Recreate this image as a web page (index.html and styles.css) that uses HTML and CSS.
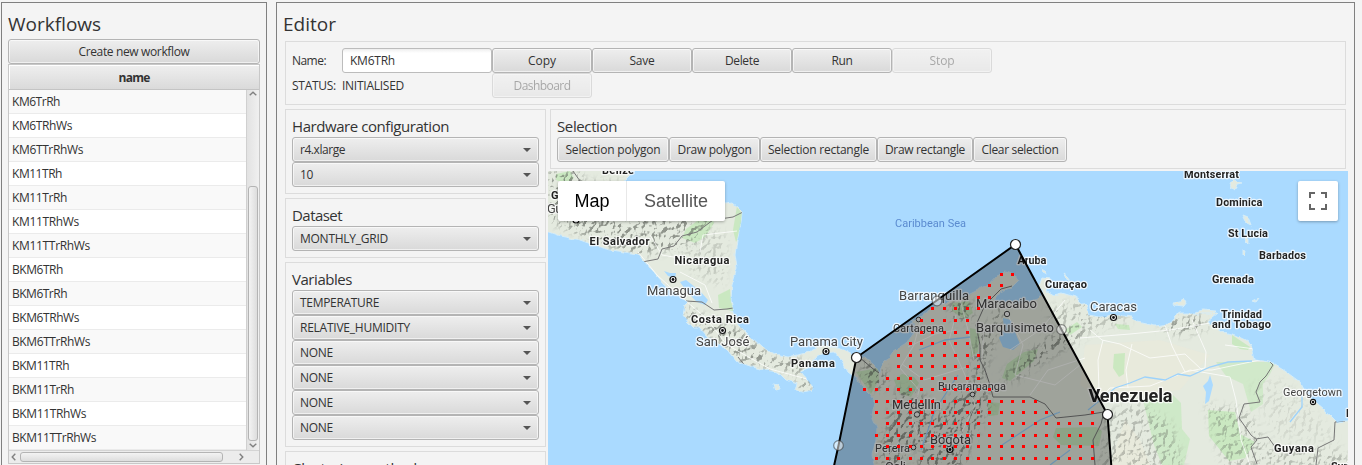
FILE: index.html
```html
<!DOCTYPE html>
<html lang="en">
<head>
<meta charset="utf-8">
<title>Workflow editor</title>
<link rel="stylesheet" href="styles.css">
</head>
<body>
<div class="app">
  <section class="panel workflows">
    <h1 class="title">Workflows</h1>
    <button class="btn create"><span class="t" data-w="111">Create new workflow</span></button>
    <div class="table">
      <div class="thead"><span class="t" data-w="31">name</span></div>
      <div class="tbody">
        <ul class="rows">
          <li><span class="t" data-w="48">KM6TrRh</span></li>
          <li><span class="t" data-w="60">KM6TRhWs</span></li>
          <li><span class="t" data-w="71">KM6TTrRhWs</span></li>
          <li><span class="t" data-w="50">KM11TRh</span></li>
          <li><span class="t" data-w="55">KM11TrRh</span></li>
          <li><span class="t" data-w="67">KM11TRhWs</span></li>
          <li><span class="t" data-w="78">KM11TTrRhWs</span></li>
          <li><span class="t" data-w="51">BKM6TRh</span></li>
          <li><span class="t" data-w="55">BKM6TrRh</span></li>
          <li><span class="t" data-w="67">BKM6TRhWs</span></li>
          <li><span class="t" data-w="78">BKM6TTrRhWs</span></li>
          <li><span class="t" data-w="57">BKM11TRh</span></li>
          <li><span class="t" data-w="62">BKM11TrRh</span></li>
          <li><span class="t" data-w="74">BKM11TRhWs</span></li>
          <li><span class="t" data-w="84">BKM11TTrRhWs</span></li>
        </ul>
        <div class="vscroll">
          <svg class="chev" width="8" height="5" viewBox="0 0 8 5"><path d="M.7 4.3 4 1.2 7.300 4.300"/></svg>
          <div class="vthumb"></div>
          <svg class="chev" width="8" height="5" viewBox="0 0 8 5"><path d="M.7.700 4 3.800 7.300.700"/></svg>
        </div>
      </div>
      <div class="hscroll">
        <svg class="chev" width="5" height="8" viewBox="0 0 5 8"><path d="M4.300.700 1.200 4 4.300 7.300"/></svg>
        <div class="hthumb"></div>
        <svg class="chev" width="5" height="8" viewBox="0 0 5 8"><path d="M.7.700 3.800 4 .7 7.300"/></svg>
      </div>
    </div>
  </section>

  <section class="panel editor">
    <h1 class="title">Editor</h1>
    <div class="box details">
      <span class="t" data-w="34">Name:</span>
      <div class="field"><span class="t" data-w="45">KM6TRh</span></div>
      <button class="btn"><span class="t" data-w="28">Copy</span></button>
      <button class="btn"><span class="t" data-w="25">Save</span></button>
      <button class="btn"><span class="t" data-w="34">Delete</span></button>
      <button class="btn"><span class="t" data-w="21">Run</span></button>
      <button class="btn off"><span class="t" data-w="25">Stop</span></button>
      <span class="t" data-w="44">STATUS:</span>
      <span class="t" data-w="62">INITIALISED</span>
      <button class="btn off"><span class="t" data-w="57">Dashboard</span></button>
    </div>
    <div class="columns">
      <div class="settings">
        <div class="box group">
          <h2><span class="t" data-w="157">Hardware configuration</span></h2>
          <div class="select"><span class="t" data-w="45">r4.xlarge</span></div>
          <div class="select"><span class="t" data-w="13">10</span></div>
        </div>
        <div class="box group">
          <h2><span class="t" data-w="50">Dataset</span></h2>
          <div class="select"><span class="t" data-w="88">MONTHLY_GRID</span></div>
        </div>
        <div class="box group">
          <h2><span class="t" data-w="60">Variables</span></h2>
          <div class="select"><span class="t" data-w="79">TEMPERATURE</span></div>
          <div class="select"><span class="t" data-w="110">RELATIVE_HUMIDITY</span></div>
          <div class="select"><span class="t" data-w="33">NONE</span></div>
          <div class="select"><span class="t" data-w="33">NONE</span></div>
          <div class="select"><span class="t" data-w="33">NONE</span></div>
          <div class="select"><span class="t" data-w="33">NONE</span></div>
        </div>
        <div class="box group">
          <h2><span class="t" data-w="125">Clustering method</span></h2>
        </div>
      </div>
      <div class="workspace">
        <div class="box group selection">
          <h2><span class="t" data-w="60">Selection</span></h2>
          <div class="tools">
            <button class="btn"><span class="t" data-w="95">Selection polygon</span></button>
            <button class="btn"><span class="t" data-w="74">Draw polygon</span></button>
            <button class="btn"><span class="t" data-w="101">Selection rectangle</span></button>
            <button class="btn"><span class="t" data-w="80">Draw rectangle</span></button>
            <button class="btn"><span class="t" data-w="77">Clear selection</span></button>
          </div>
        </div>
        <div class="map">
          <svg class="canvas" width="800" height="294" viewBox="548 171 800 294">
            <defs>
              <filter id="relief" x="0" y="0" width="100%" height="100%" color-interpolation-filters="sRGB">
                <feTurbulence type="fractalNoise" baseFrequency=".2 .17" numOctaves="3" seed="7" result="n"/>
                <feDiffuseLighting in="n" surfaceScale="4" diffuseConstant="1.25" lighting-color="#fff"><feDistantLight azimuth="225" elevation="52"/></feDiffuseLighting>
                <feColorMatrix values="0 0 0 0 .36  0 0 0 0 .38  0 0 0 0 .35  -2.400 0 0 0 1.950" result="sh"/>
                <feGaussianBlur in="SourceAlpha" stdDeviation="4" result="m"/>
                <feComposite in="sh" in2="m" operator="in"/>
              </filter>
              <filter id="rough" x="-5%" y="-5%" width="110%" height="110%">
                <feTurbulence type="fractalNoise" baseFrequency=".12" numOctaves="2" seed="3"/>
                <feDisplacementMap in="SourceGraphic" scale="5" xChannelSelector="R" yChannelSelector="G"/>
              </filter>
              <clipPath id="landclip"><use href="#land"/></clipPath>
            </defs>
            <rect class="water" x="548" y="171" width="800" height="294"/>
            <g filter="url(#rough)">
              <path id="land" class="land" d="M540 160H634L630 174 622 182 640 195 700 200 725 204 732 203 738 208 742 212 741 222 737 240 735 255 737 268 732 285 731 300 733 310 740 326 752 338 763 348 775 354 788 357 806 353 820 347 833 346 845 351 856 357 865 357 875 366 880 373 881 366 886 361 893 352 907 342 917 329 912 322 922 316 932 308 946 303 960 299 974 292 988 285 996 276 1005 272 1014 275 1018 281 1012 287 1000 292 993 300 1000 302 1020 304 1038 299 1043 292 1039 286 1042 278 1050 279 1047 291 1054 295 1062 293 1075 297 1085 305 1088 315 1100 317 1115 315 1132 317 1138 322 1155 326 1168 324 1175 316 1180 313 1200 313 1218 313 1208 321 1220 331 1236 335 1248 341 1253 350 1255 360 1270 362 1285 371 1300 382 1306 393 1318 405 1330 415 1337 422 1356 420V475H876L872 455 876 440 877 428 872 415 875 402 870 395 862 387 856 378 848 372 842 361 835 353 822 354 812 360 807 368 800 371 808 380 814 387 812 390 803 392 795 391 797 383 786 380 778 372 765 370 750 366 738 362 728 350 718 343 708 337 700 328 694 328 688 322 683 315 685 305 688 302 680 297 665 285 652 270 643 260 638 254 625 252 605 249 580 240 560 236 540 229Z"/>
              <path class="land" d="M773 384l5 1 1 4-4 1zM1174 304l6-1 3-5 3 5-3 4-8-1zM1195 312l8-2 13 1-3 3h-16zM1243 215l5 2 3 8-4-2zM1229 183l5-3 8 3-5 1-2 6-4-3zM1253 301l6-3-3 4zM1243 250l3 1-1 5-2-2zM1246 237l2 1v5l-3-3zM1041 268l4 2 2 4-4-2zM1063 273l5 4 3 4-5-3z"/>
            </g>
            <g clip-path="url(#landclip)">
              <g class="plain">
                <path d="M1085 345 1160 340 1210 355 1180 390 1100 400 1080 385z"/>
                <path d="M1125 420 1140 440 1150 465H1110z"/>
              </g>
              <g class="forest">
                <path d="M556 174l14-3 4 7-8 6-10-4z"/><path d="M686 229l14-10 12 0 2 4-9 14-10 6-13-5z"/>
                <path d="M737 206l5 8-1 20-5 8-3-12z"/><path d="M718 295l12-6 1 13 6 10-18-4z"/>
                <path d="M856 372l22-4 1 12-8 14z"/><path d="M952 303l17-2 4 12-9 6-12-8z"/>
                <path d="M894 380l8-6 12 3 5 6-8 14-12-4z"/><path d="M970 328l10 2-2 22-7 5z"/>
                <path d="M1007 364l17-12 14-3-4 12-24 20-8-3z"/><path d="M988 402l12 1-2 12-9 1z"/>
                <path d="M1056 428l40-1 6 4-3 15-38-1-8-8z"/><path d="M1114 354l11-1-1 21-5 3-6-9z"/>
                <path d="M1232 335l18 12-2 3-8-1-8-5z"/><path d="M1216 362l60 0-6 12-7 10 0 20-12 8-8-28-17-8z" opacity=".7"/>
                <path d="M1143 400l30-5 8 8 1 26 8 10-6 26h-22l-8-20z" opacity=".8"/><path d="M1208 410l27 2 5 22 15 8-10 16-16 3-20-25z"/>
                <path d="M1115 324l14 1 1 5-12-1z"/><path d="M1065 330l12-8 5 5-12 8z"/>
              </g>
              <g class="relief" filter="url(#relief)">
                <path d="M548 171h30l6 12h70l58 8-4 34-26 22-40 8-18-3-22-8-54-24z"/>
                <path d="M700 225l26 10-2 50-30-10-10-24z" opacity=".35"/>
                <path d="M684 305l20 12 34 12 34 28 34 4-4 14-20-6-44-7-40-38-16-10z"/>
                <path d="M795 380h16v10h-14z"/>
                <path d="M866 358l18 10 2 16-10 8-14-16z"/>
                <path d="M900 386l26 12 10 20 16-20 20-10 5-50 14-16 10-22 4 6-12 36-12 38 10 26-10 14-26 60h-40l8-36-16 4-10 32h-18l4-40z"/>
                <path d="M950 300h22v20h-20z"/>
                <path d="M1002 376l46-38 40-14-6 14-30 16-40 28z"/>
                <path d="M1045 310l34-10 28 8 26 12-36 10-30 6z" opacity=".5"/>
                <path d="M1165 320l36-5 6 14-26 5-20-5z"/>
                <path d="M1106 412l36-8 30 20 12 45h-84z" opacity=".55"/>
                <path d="M1205 405l40 4 26 40 70 0 14 20h-130z" opacity=".55"/>
                <path d="M1250 385l34-5 54 60h-60z" opacity=".2"/>
              </g>
              <g class="lakes">
                <path d="M664 271l6 2 6 0-1 5-7-2zM680 282l6-2 14 11 8 9-3 5-8-3-10-10z"/>
                <path d="M1003 318l8 2 4 12 5 12-7 6-10-3-4-9 5-10z"/>
                <path d="M1203 386l5-5 2-6 3 10-4 16-4 3 1-12z"/>
              </g>
              <g class="roads">
                <path d="M638 252 657 275 680 296 706 318 727 345 770 369 807 379"/>
                <path d="M680 272 705 285 712 303M700 252 703 235 737 231M650 235 662 255 690 260"/>
                <path d="M921 318 914 345 900 368 919 390 912 420 922 444 960 436 975 405 965 375 949 340 956 315M960 299 968 330 974 360M908 347 935 334 956 330M902 364 924 380 970 366"/>
                <path d="M1080 338 1130 334 1170 330 1210 323M1090 330 1102 340 1120 344 1150 358 1185 354 1202 370 1212 370 1260 360M1165 325 1172 346 1185 372 1205 368 1206 352 1192 320M1132 344 1126 370 1128 388M1099 390 1098 360 1103 340M1088 410 1110 388 1150 386 1190 370 1230 377 1236 400 1241 440 1250 465M1270 362 1262 350 1225 345"/>
                <path d="M984 325 982 360M1000 300 1023 345 1015 375 1055 385 1080 365M1030 395 1048 370 1085 358M1010 350 1040 330 1065 300"/>
              </g>
              <g class="rivers">
                <path d="M1088 410 1115 388 1130 383 1145 377 1165 380 1178 374 1190 376 1210 367 1228 362 1252 361M1302 391 1302 407 1290 422"/>
                <path d="M1002 445 1040 420 1060 412M958 375 935 410 921 450M919 350 945 340 970 337M1050 465 1070 450"/>
              </g>
              <g class="borders">
                <path d="M573 171 580 181M745 211 733 217 713 220 697 232 682 236 674 246 662 249 658 259 642 262M686 301 702 302 714 310 727 309 733 308M738 357 746 367 750 373M859 357 872 368 879 373"/>
                <path d="M1012 286 1001 289 985 305 976 325 980 345 980 360 985 370 990 385 993 397 1030 397 1045 404 1056 418 1085 415 1104 412 1101 424 1093 440 1095 465"/>
                <path d="M1270 362 1273 365 1266 376 1260 382 1256 392 1260 402 1244 404 1239 418 1251 435 1257 440 1251 447 1257 464M1256 439 1268 437 1278 451 1300 449M1345 421 1335 422 1334 440 1318 448 1316 465"/>
              </g>
            </g>
            <g class="cities">
              <g class="capital"><circle cx="673" cy="279.500" r="3"/><circle cx="722.500" cy="330.500" r="3"/><circle cx="826" cy="351.500" r="3"/><circle cx="1113.500" cy="317.500" r="3"/><circle cx="1313" cy="402" r="2.600"/><circle cx="950" cy="449.500" r="3"/><circle cx="576" cy="220" r="3"/></g>
              <g class="dot"><circle cx="673" cy="279.500" r="1.400"/><circle cx="722.500" cy="330.500" r="1.400"/><circle cx="826" cy="351.500" r="1.400"/><circle cx="1113.500" cy="317.500" r="1.400"/><circle cx="1313" cy="402" r="1.200"/><circle cx="950" cy="449.500" r="1.400"/></g>
              <g class="town"><circle cx="918.500" cy="319.500" r="2.300"/><circle cx="1007" cy="314" r="2.700"/><circle cx="972.500" cy="394.500" r="2.300"/><circle cx="917" cy="414.500" r="2.700"/><circle cx="913.500" cy="447.500" r="2.300"/></g>
            </g>
            <g class="labels country">
              <text x="602" y="174" textLength="32">Belize</text>
              <text x="551" y="199" textLength="58">Guatemala</text>
              <text x="589.500" y="245" textLength="60">El Salvador</text>
              <text x="674.500" y="264" textLength="55">Nicaragua</text>
              <text x="691" y="323" textLength="58">Costa Rica</text>
              <text x="791" y="367" textLength="44">Panama</text>
              <text x="1017.500" y="263.500" textLength="29">Aruba</text>
              <text x="1045" y="288" textLength="42">Curaçao</text>
              <text x="1184" y="178" textLength="55">Montserrat</text>
              <text x="1216" y="206" textLength="46.500">Dominica</text>
              <text x="1228" y="237" textLength="40">St Lucia</text>
              <text x="1259" y="259" textLength="47">Barbados</text>
              <text x="1212" y="283" textLength="42">Grenada</text>
              <text x="1221" y="318" textLength="41">Trinidad</text>
              <text x="1212" y="328" textLength="59">and Tobago</text>
              <text x="1274" y="452" textLength="40">Guyana</text>
              <text x="1331" y="470" textLength="46">Suriname</text>
              <text x="1346" y="417" textLength="50">Paramar</text>
              <text class="big" x="1088.500" y="401.500" textLength="84">Venezuela</text>
            </g>
            <g class="labels city">
              <text x="547" y="213" textLength="58">Guatemala</text>
              <text x="647" y="295" textLength="54">Managua</text>
              <text x="696" y="346" textLength="53.500">San José</text>
              <text x="790" y="346" textLength="73">Panama City</text>
              <text x="899" y="299.500" textLength="70">Barranquilla</text>
              <text x="976" y="307.500" textLength="61">Maracaibo</text>
              <text x="976" y="332" textLength="78">Barquisimeto</text>
              <text x="1090" y="311" textLength="47">Caracas</text>
              <text x="892" y="409" textLength="49">Medellín</text>
              <text x="930" y="444" textLength="41">Bogotá</text>
              <text x="885" y="471" textLength="21">Cali</text>
              <g class="small">
                <text x="893" y="332" textLength="51">Cartagena</text>
                <text x="938" y="390" textLength="68">Bucaramanga</text>
                <text x="875" y="452" textLength="35">Pereira</text>
                <text x="1283" y="396" textLength="59">Georgetown</text>
              </g>
            </g>
            <text class="sea" x="895" y="227" textLength="71">Caribbean Sea</text>
            <path class="area" d="M1015.500 244.500 1107.500 414.500 1112 475H832L838.500 445.500 856.500 357.500Z"/>
            <path id="points" class="points"/>
            <g class="mid"><circle cx="937" cy="301" r="4.800"/><circle cx="1061.500" cy="329.500" r="4.800"/><circle cx="838.500" cy="445.500" r="4.800"/></g>
            <g class="vertex"><circle cx="1015.500" cy="244.500" r="5"/><circle cx="856.500" cy="357.500" r="5"/><circle cx="1107.500" cy="414.500" r="5"/></g>
          </svg>
          <div class="maptype"><span class="active"><span class="t" data-w="35">Map</span></span><span><span class="t" data-w="64">Satellite</span></span></div>
          <div class="fullscreen">
            <svg width="18" height="18" viewBox="0 0 18 18"><path d="M1 6V1H6M12 1h5v5M17 12v5H12M6 17H1V12"/></svg>
          </div>
        </div>
      </div>
    </div>
  </section>
</div>
<script src="app.js"></script>
</body>
</html>
```
FILE: styles.css
```css
* { box-sizing: border-box; }
body {
  margin: 0;
  background: #f4f4f4;
  color: #333;
  font: 12px "Open Sans", "Noto Sans", sans-serif;
  overflow: hidden;
}
h1, h2, ul { margin: 0; padding: 0; font-weight: 400; list-style: none; }
.t { display: inline-block; white-space: nowrap; }
.app { display: flex; gap: 9px; height: 465px; padding: 2px 7px 0 1px; overflow: hidden; }
.panel { height: 480px; border: 1px solid #808080; flex: none; }
.workflows { width: 266px; padding: 0 6px; }
.editor { width: 1079px; padding: 0 8px; }
.title { height: 36px; padding-top: 7px; font-size: 19px; line-height: 29px; }
.editor .title { height: 38px; margin-left: -2px; }

.btn, .select {
  height: 25px;
  padding: 0;
  border: 1px solid #b4b4b4;
  border-radius: 3px;
  background: linear-gradient(#eee, #d9d9d9);
  box-shadow: inset 0 0 0 1px rgba(255, 255, 255, .6);
  color: #333;
  font: inherit;
  line-height: 22px;
  text-align: center;
}
.off { opacity: .4; }
.create { display: block; width: 252px; }

.table { width: 252px; border: 1px solid #c8c8c8; }
.thead {
  height: 25px;
  border-bottom: 1px solid #c4c4c4;
  background: linear-gradient(#efefef, #dadada);
  box-shadow: inset 1px 1px #fff;
  font-weight: 700;
  line-height: 25px;
  text-align: center;
}
.tbody { display: flex; height: 360px; }
.rows { width: 237px; }
.rows li { height: 24px; padding-left: 3px; border-bottom: 1px solid #ebebeb; background: #fff; line-height: 23px; }
.rows li:nth-child(odd) { background: #f9f9f9; }
.vscroll {
  display: flex; flex-direction: column; align-items: center; justify-content: space-between;
  width: 13px; padding: 1px 0 2px; border-left: 1px solid #d0d0d0;
  background: linear-gradient(90deg, #e2e2e2, #f0f0f0);
}
.vthumb { width: 10px; height: 255px; margin-top: 87px; border: 1px solid #b4b4b4; border-radius: 3px; background: linear-gradient(90deg, #f3f3f3, #ddd); }
.hscroll { display: flex; align-items: center; height: 13px; padding: 0 15px 0 2px; border-top: 1px solid #d4d4d4; background: #ececec; }
.hthumb { width: 204px; height: 10px; margin: 0 16px 0 4px; border: 1px solid #b4b4b4; border-radius: 3px; background: linear-gradient(#f3f3f3, #ddd); }
.chev { flex: none; fill: none; stroke: #808080; stroke-width: 1.4; }

.box { border: 1px solid #dcdcdc; padding: 6px; }
.details {
  display: grid;
  grid-template-columns: 50px 150px repeat(5, 100px);
  grid-template-rows: 25px 25px;
  align-items: center;
  width: 1061px;
  height: 64px;
}
.details > .t { justify-self: start; }
.details .btn { width: 100%; }
.field {
  height: 25px; padding-left: 7px; border: 1px solid #bcbcbc; border-radius: 3px;
  background: linear-gradient(#eee, #fff 4px); line-height: 23px;
}
.columns { display: flex; gap: 2px; margin-top: 4px; }
.settings { display: flex; flex: none; flex-direction: column; gap: 4px; width: 261px; }
.group h2 { height: 21px; font-size: 15px; line-height: 21px; }
.group { flex: none; }
.group .t { vertical-align: top; }
.select { position: relative; padding-left: 7px; text-align: left; line-height: 23px; }
.select::after {
  content: ""; position: absolute; right: 7px; top: 10px;
  border: 4px solid transparent; border-top-color: #555; border-bottom: 0;
}
.workspace { flex: none; width: 800px; }
.selection { width: 796px; margin-left: 2px; height: 60px; }
.tools { display: grid; grid-template-columns: 112px 91px 117px 96px 94px; }

.map { position: relative; width: 800px; height: 294px; margin-top: 2px; font-family: Roboto, sans-serif; }
.canvas { display: block; }
.water { fill: #aadaff; }
.land { fill: #e4eadf; stroke: #d4ecf8; stroke-width: 1; }
.plain { fill: #ece9da; opacity: .5; }
.forest { fill: #c3e8ba; opacity: .8; }
.relief { opacity: .62; }
.lakes { fill: #aadaff; }
.roads { fill: none; stroke: #fff; stroke-width: 1; opacity: .75; stroke-linejoin: round; }
.rivers { fill: none; stroke: #9dd2fb; stroke-width: 1.3; }
.borders { fill: none; stroke: #777; stroke-width: 1; }
.capital { fill: #fff; stroke: #111; stroke-width: 1.2; }
.dot { fill: #111; }
.town { fill: #eee; stroke: #444; stroke-width: 1; }
.labels { font-family: Roboto, sans-serif; paint-order: stroke; stroke: rgba(255, 255, 255, .75); stroke-width: 2.5px; stroke-linejoin: round; }
.country { font-size: 11px; font-weight: 700; fill: #222; }
.country .big { font-size: 18px; }
.city { font-size: 13px; fill: #444; }
.city .small { font-size: 11px; }
.sea { font-size: 11px; fill: #5b8bd0; }
.area { fill: #000; fill-opacity: .3; stroke: #000; stroke-width: 2; }
.points { stroke: red; stroke-width: 3; fill: none; shape-rendering: crispEdges; }
.vertex { fill: #fff; stroke: #222; stroke-width: 1.2; }
.mid { fill: #fff; fill-opacity: .5; stroke: #333; stroke-opacity: .55; stroke-width: 1.2; }
.maptype {
  position: absolute; left: 10px; top: 10px; display: flex; height: 40px;
  border-radius: 2px; background: #fff; box-shadow: 0 1px 3px rgba(0, 0, 0, .3);
  color: #565656; font: 18px/40px "Liberation Sans", Arial, sans-serif;
}
.maptype > span { width: 98px; text-align: center; }
.maptype > .active { width: 69px; border-right: 1px solid #e8e8e8; color: #000; }
.fullscreen {
  position: absolute; right: 10px; top: 10px; display: grid; place-items: center;
  width: 40px; height: 40px; border-radius: 2px; background: #fff; box-shadow: 0 1px 3px rgba(0, 0, 0, .3);
}
.fullscreen svg { fill: none; stroke: #666; stroke-width: 2; }
```
FILE: app.js
```js
// Grid points inside the selected area: [top, [first column, last column], ...]
const columns = [863, 875, 886, 897, 909, 920, 931, 943, 954, 966, 977, 988, 1000, 1011, 1022, 1034, 1045, 1057, 1068, 1079, 1091];
const rows = [
  [273, [12, 13]], [284, [11, 12]], [296, [10, 11]], [307, [6, 10]],
  [319, [5, 9]], [331, [5, 9]], [342, [4, 9]], [354, [3, 10]], [365, [3, 10]],
  [377, [2, 10]], [388, [0, 11]], [400, [1, 15]], [411, [1, 16], [20, 20]],
  [422, [2, 20]], [434, [1, 19]], [445, [2, 20]], [457, [1, 20]]
];
let d = "";
for (const [top, ...spans] of rows)
  for (const [a, b] of spans)
    for (let c = a; c <= b; c++) d += `M${columns[c]} ${top + 1.5}h3`;
document.getElementById("points").setAttribute("d", d);

// Track each caption to its nominal width.
for (const el of document.querySelectorAll(".t[data-w]")) {
  const gap = (el.dataset.w - el.getBoundingClientRect().width) / el.textContent.length;
  el.style.letterSpacing = gap + "px";
}
```
